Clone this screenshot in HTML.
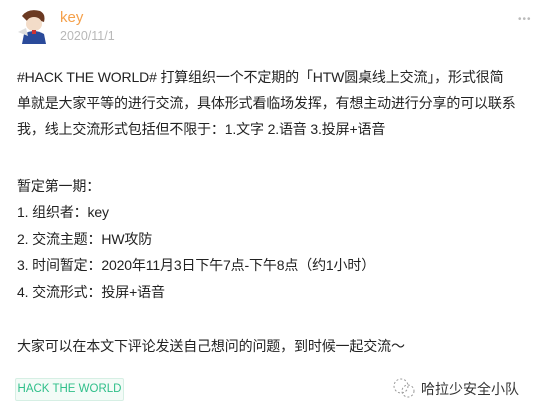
<!DOCTYPE html>
<html><head><meta charset="utf-8"><style>
body{margin:0;width:553px;height:409px;background:#fff;font-family:"Liberation Sans","Noto Sans CJK SC",sans-serif;position:relative;overflow:hidden;color:#222}
.p{position:absolute;left:17px;font-size:14px;white-space:nowrap;line-height:26px;letter-spacing:-0.15px}
</style></head><body>
<svg style="position:absolute;left:16px;top:8px" width="34" height="36" viewBox="0 0 34 36">
<path d="M6 8 Q12 0 24 3 Q30 6 28 14 L22 12 L12 14 Z" fill="#6b3a22"/>
<ellipse cx="18" cy="16" rx="8" ry="7" fill="#f3dcc8"/>
<path d="M8 26 Q18 20 28 26 L30 36 L6 36 Z" fill="#2a4a9a"/>
<path d="M2 24 L10 20 L12 28 Z" fill="#ddd"/>
<rect x="16" y="22" width="4" height="4" fill="#c33"/>
</svg>
<div style="position:absolute;left:60px;top:9px;font-size:15px;color:#f5a04a">key</div>
<div style="position:absolute;left:60px;top:29px;font-size:12.5px;color:#b8b8b8">2020/11/1</div>
<div style="position:absolute;left:518px;top:14px;font-size:10px;color:#bbb;letter-spacing:1px">•••</div>
<div class="p" style="top:64px">#HACK THE WORLD# 打算组织一个不定期的「HTW圆桌线上交流」，形式很简</div>
<div class="p" style="top:90px">单就是大家平等的进行交流，具体形式看临场发挥，有想主动进行分享的可以联系</div>
<div class="p" style="top:116px">我，线上交流形式包括但不限于：1.文字 2.语音 3.投屏+语音</div>
<div class="p" style="top:173px">暂定第一期：</div>
<div class="p" style="top:199px">1. 组织者：key</div>
<div class="p" style="top:226px">2. 交流主题：HW攻防</div>
<div class="p" style="top:252px">3. 时间暂定：2020年11月3日下午7点-下午8点（约1小时）</div>
<div class="p" style="top:279px">4. 交流形式：投屏+语音</div>
<div class="p" style="top:333px">大家可以在本文下评论发送自己想问的问题，到时候一起交流～</div>
<div style="position:absolute;left:15px;top:378px;width:107px;height:21px;border:1px solid #d6efe4;background:#f3fbf7;border-radius:2px;color:#2fbf8a;font-size:11.5px;line-height:21px;text-align:center;white-space:nowrap">HACK THE WORLD</div>
<svg style="position:absolute;left:392px;top:377px" width="24" height="22" viewBox="0 0 24 22"><circle cx="9" cy="9" r="7" fill="none" stroke="#999" stroke-dasharray="2 2"/><circle cx="16" cy="14" r="6" fill="none" stroke="#999" stroke-dasharray="2 2"/></svg>
<div style="position:absolute;left:421px;top:379px;font-size:14px;color:#333">哈拉少安全小队</div>
</body></html>
